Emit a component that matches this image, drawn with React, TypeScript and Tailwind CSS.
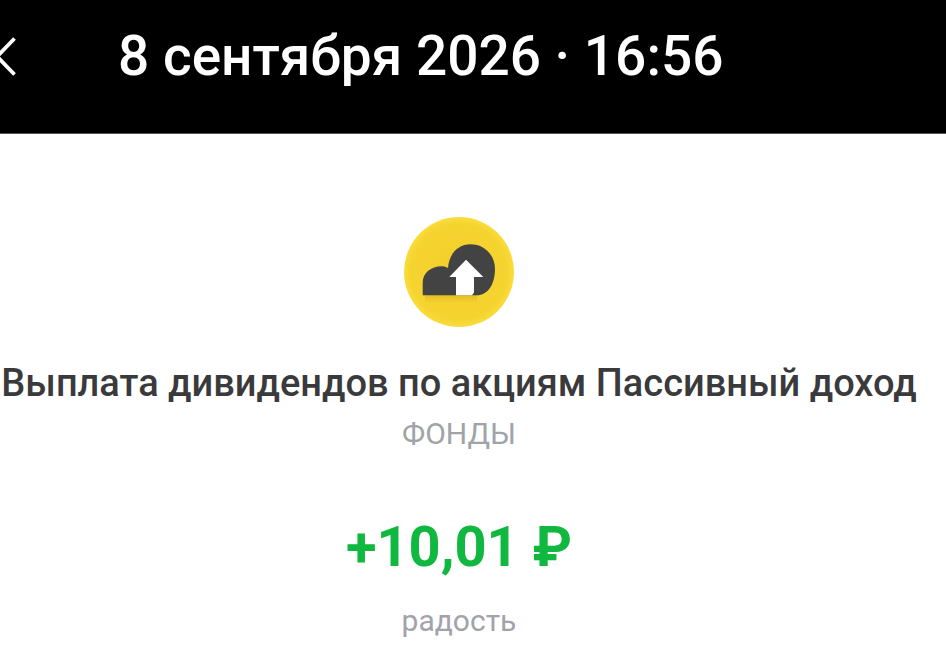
function BackIcon() {
  return (
    <svg width="18" height="44" viewBox="0 0 18 44" fill="none" stroke="#fff" strokeWidth="3.8" aria-hidden="true" className="shrink-0">
      <path d="M14.500 4.500 L-3 22.500 L14.500 40.500" />
    </svg>
  );
}

function FundIcon() {
  return (
    <svg width="112" height="112" viewBox="0 0 112 112" aria-hidden="true">
      <defs>
        <radialGradient id="coin" cx="0.5" cy="0.5" r="0.5">
          <stop offset="0" stopColor="#f3cd2b" />
          <stop offset="0.88" stopColor="#f6d430" />
          <stop offset="1" stopColor="#f9dc3c" />
        </radialGradient>
        <linearGradient id="shade" x1="0" y1="0" x2="0" y2="1">
          <stop offset="0" stopColor="#c9a014" stopOpacity="0.4" />
          <stop offset="1" stopColor="#c9a014" stopOpacity="0" />
        </linearGradient>
      </defs>
      <circle cx="56" cy="56" r="55" fill="url(#coin)" />
      <rect x="22" y="79" width="52" height="8" fill="url(#shade)" />
      <path
        d="M19.700 79.300 V67 C19.700 57 28 50.300 38.700 50.300 C41 50.300 43 50.800 45 52 C46 38 55 28.300 67.500 28.300 C81.500 28.300 92 39 92 53 C92 68 85 79.300 73.700 79.300 Z"
        fill="#434343"
      />
      <path d="M53 79.300 V61 H46.300 L63 43.700 L80.300 61 H71 V76.500 L69 79.300 Z" fill="#fff" />
    </svg>
  );
}

export default function App() {
  return (
    <div className="flex h-[667px] w-[946px] flex-col overflow-hidden bg-white font-['Roboto',sans-serif]">
      <header className="flex h-[134px] shrink-0 items-center border-b border-[#555] bg-black pb-[21px]">
        <BackIcon />
        <h1 className="ml-[100px] whitespace-nowrap text-[55px] font-medium leading-none text-white">
          8 сентября 2026 · 16:56
        </h1>
      </header>

      <main className="flex w-[918px] flex-col items-center pt-[82px]">
        <FundIcon />
        <p className="mt-[33px] whitespace-nowrap text-[38px] font-medium leading-[44px] text-[#3a3a3c]">
          Выплата дивидендов по акциям Пассивный доход
        </p>
        <p className="mt-[11px] text-[30px] leading-[36px] text-[#a0a3a9]">ФОНДЫ</p>
        <p className="mt-[63px] whitespace-nowrap text-[56px] font-bold leading-[64px] text-[#10b83f]">
          +10,01 ₽
        </p>
        <p className="mt-[24px] text-[30px] leading-[36px] text-[#a0a3a9]">радость</p>
      </main>
    </div>
  );
}
